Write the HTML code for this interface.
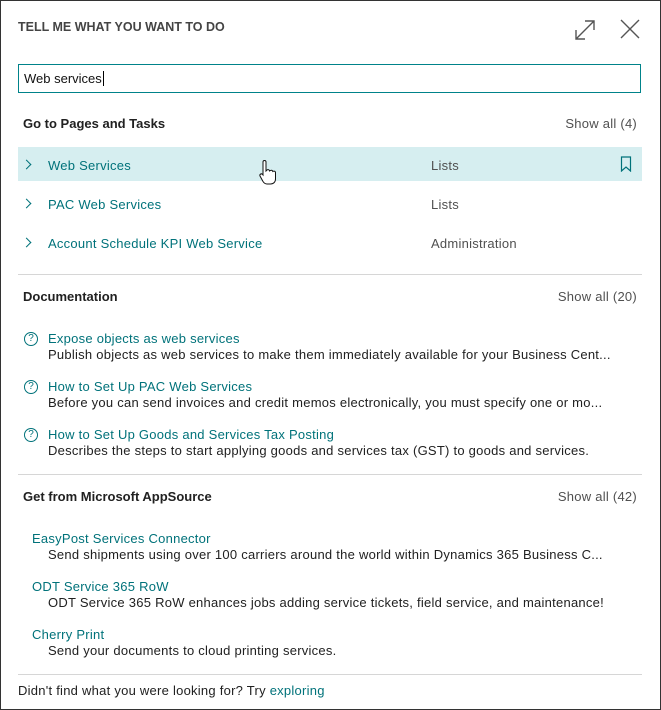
<!DOCTYPE html>
<html><head><meta charset="utf-8"><style>
body{margin:0;width:661px;height:710px;overflow:hidden;background:#fff;font-family:"Liberation Sans",sans-serif;font-size:13px;color:#212121;letter-spacing:0.25px}
.frame{position:absolute;left:0;top:0;width:659px;height:708px;border:1px solid #333;}
.a{position:absolute;white-space:nowrap}
.link{color:#00727a}
.gray{color:#505050}
.hr{position:absolute;left:18px;width:624px;height:1px;background:#d6d6d6}
.chev{position:absolute;left:24px;width:6px;height:6px;border-top:1px solid #00727a;border-right:1px solid #00727a;transform:rotate(45deg)}
.q{position:absolute;left:24px;width:12px;height:12px;border:1px solid #00727a;border-radius:50%;font-size:10px;line-height:12px;text-align:center;color:#00727a;letter-spacing:0}
</style></head><body><div class="frame"></div>
<div class="a" style="left:18px;top:20px;font-size:12.5px;color:#444;font-weight:bold;letter-spacing:0">TELL ME WHAT YOU WANT TO DO</div>
<svg class="a" style="left:573px;top:18px" width="24" height="24" viewBox="0 0 24 24" fill="none" stroke="#555" stroke-width="1.4"><path d="M3 21L21 3M12 3h9v9M3 12v9h9"/></svg>
<svg class="a" style="left:620px;top:19px" width="20" height="20" viewBox="0 0 20 20" fill="none" stroke="#555" stroke-width="1.4"><path d="M1 1L19 19M19 1L1 19"/></svg>
<div class="a" style="left:18px;top:64px;width:621px;height:27px;border:1px solid #00838a"></div>
<div class="a" style="left:24px;top:71px;color:#111;letter-spacing:0">Web services<span style="border-left:1px solid #000;margin-left:1px"></span></div>
<div class="a" style="left:23px;top:116px;font-weight:bold;letter-spacing:0">Go to Pages and Tasks</div>
<div class="a gray" style="right:24px;top:116px">Show all (4)</div>
<div class="a" style="left:18px;top:147px;width:624px;height:34px;background:#d6eef0"></div>
<div class="chev" style="top:161px;left:23px"></div><div class="a link" style="left:48px;top:158px">Web Services</div><div class="a gray" style="left:431px;top:158px">Lists</div>
<svg class="a" style="left:620px;top:156px" width="12" height="16" viewBox="0 0 12 16" fill="none" stroke="#00727a" stroke-width="1.2"><path d="M1.5 1h9v14L6 11l-4.5 4z"/></svg>
<svg class="a" style="left:258px;top:160px" width="20" height="26" viewBox="0 0 20 26"><path d="M5 2a1.5 1.5 0 013 0v9l1-1a1.5 1.5 0 012.5 1l1-.5a1.5 1.5 0 012.3 1l.7-.3a1.5 1.5 0 012 1.3V19c0 3-2 5-5 5H9c-2 0-3-1-4-2.5L2 16a1.5 1.5 0 012.3-1.8L5 15z" fill="#fff" stroke="#111" stroke-width="1"/></svg>
<div class="chev" style="top:200px;left:23px"></div><div class="a link" style="left:48px;top:197px">PAC Web Services</div><div class="a gray" style="left:431px;top:197px">Lists</div>
<div class="chev" style="top:239px;left:23px"></div><div class="a link" style="left:48px;top:236px">Account Schedule KPI Web Service</div><div class="a gray" style="left:431px;top:236px">Administration</div>
<div class="hr" style="top:274px"></div>
<div class="a" style="left:23px;top:289px;font-weight:bold;letter-spacing:0">Documentation</div>
<div class="a gray" style="right:24px;top:289px">Show all (20)</div>
<div class="q" style="top:332px">?</div><div class="a link" style="left:48px;top:331px">Expose objects as web services</div><div class="a" style="left:48px;top:347px">Publish objects as web services to make them immediately available for your Business Cent...</div>
<div class="q" style="top:380px">?</div><div class="a link" style="left:48px;top:379px">How to Set Up PAC Web Services</div><div class="a" style="left:48px;top:395px">Before you can send invoices and credit memos electronically, you must specify one or mo...</div>
<div class="q" style="top:428px">?</div><div class="a link" style="left:48px;top:427px">How to Set Up Goods and Services Tax Posting</div><div class="a" style="left:48px;top:443px">Describes the steps to start applying goods and services tax (GST) to goods and services.</div>
<div class="hr" style="top:474px"></div>
<div class="a" style="left:23px;top:489px;font-weight:bold;letter-spacing:0">Get from Microsoft AppSource</div>
<div class="a gray" style="right:24px;top:489px">Show all (42)</div>
<div class="a link" style="left:32px;top:531px">EasyPost Services Connector</div><div class="a" style="left:48px;top:547px">Send shipments using over 100 carriers around the world within Dynamics 365 Business C...</div>
<div class="a link" style="left:32px;top:579px">ODT Service 365 RoW</div><div class="a" style="left:48px;top:595px">ODT Service 365 RoW enhances jobs adding service tickets, field service, and maintenance!</div>
<div class="a link" style="left:32px;top:627px">Cherry Print</div><div class="a" style="left:48px;top:643px">Send your documents to cloud printing services.</div>
<div class="hr" style="top:674px"></div>
<div class="a" style="left:18px;top:683px">Didn't find what you were looking for? Try <span class="link">exploring</span></div>
</body></html>
